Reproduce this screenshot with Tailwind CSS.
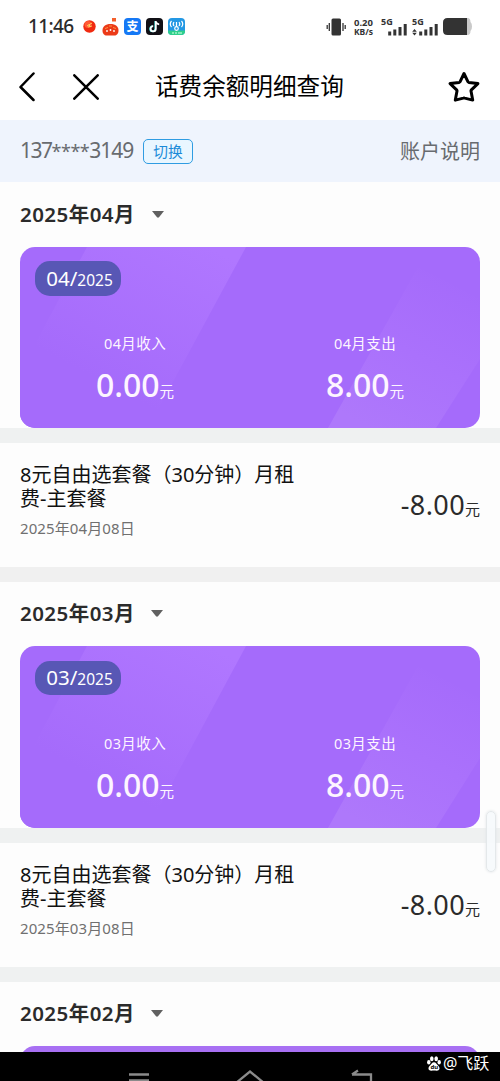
<!DOCTYPE html>
<html lang="zh-CN">
<head>
<meta charset="utf-8">
<title>话费余额明细查询</title>
<script src="https://cdn.jsdelivr.net/npm/@tailwindcss/browser@4"></script>
</head>
<body class="bg-[#fdfdfd]">
<div class="relative flex h-[1081px] w-[500px] flex-col overflow-hidden bg-[#fdfdfd] font-['Noto_Sans','Noto_Sans_CJK_SC',sans-serif] text-[#2b2b2b] whitespace-nowrap">

  <!-- Status bar -->
  <div class="flex h-[53px] shrink-0 items-center bg-white pl-[28px] pr-[28px]">
    <span class="w-[46px] text-[19px] leading-[53px] font-medium tracking-[-0.6px]">11:46</span>
    <div class="ml-[9px] flex items-center gap-[5px]">
      <svg width="13" height="17" viewBox="0 0 13 17"><circle cx="6.5" cy="8.5" r="6.2" fill="#f02a10"/><circle cx="5" cy="6.500" r="3.500" fill="#ff5a34"/><path d="M4 8l5-3M5 9l4-1M6 6l1 3" stroke="#ffd060" stroke-width="1"/></svg>
      <svg class="ml-[1px]" width="17" height="18" viewBox="0 0 17 18"><rect x="10" y="0" width="4" height="3.500" fill="#f4602c"/><path d="M.5 12.500c0-4 3-6.500 8-6.500s8 2.500 8 6.500c0 3.500-2 5-4 5H4.500c-2 0-4-1.500-4-5z" fill="#ec3a18"/><path d="M3 10.500l3-1M7 8h3M11 9.500l3 1" stroke="#ff9440" stroke-width="1"/><circle cx="5" cy="13" r=".9" fill="#fff"/><circle cx="8.500" cy="12" r=".9" fill="#fff"/><circle cx="12" cy="13" r=".9" fill="#fff"/></svg>
      <span class="flex size-[17px] items-center justify-center rounded-[4px] bg-[#1578f5] text-[12px] leading-none font-bold text-white">支</span>
      <svg width="17" height="17" viewBox="0 0 17 17"><rect width="17" height="17" rx="4" fill="#111016"/><path d="M9.300 3v7.700a2.600 2.600 0 1 1-2.600-2.600" fill="none" stroke="#35e0dc" stroke-width="1.800"/><path d="M9.800 3v7.700a2.600 2.600 0 1 1-2.600-2.600M9.800 3c.3 2.200 1.500 3.100 3.400 3.300" fill="none" stroke="#fff" stroke-width="1.800"/></svg>
      <svg width="17" height="17" viewBox="0 0 17 17"><rect width="17" height="17" rx="4" fill="#2398e4"/><path d="M0 12.500h17v.5a4 4 0 0 1-4 4H4a4 4 0 0 1-4-4z" fill="#2fd08a"/><g fill="none" stroke="#fff" stroke-width="1.200"><path d="M3.500 3q-2.500 3 0 6M6 4q-1.600 2 0 4M13.500 3q2.500 3 0 6M11 4q1.600 2 0 4"/><circle cx="8.500" cy="10.500" r="1.800"/><path d="M8.500 4v4.500"/></g><path d="M4 15h2m1 0h2m1 0h4" stroke="#d8ffe8" stroke-width="1.200"/></svg>
    </div>
    <div class="ml-auto flex items-center">
      <svg width="20" height="18" viewBox="0 0 20 18"><rect x="5.500" y="0.500" width="9.500" height="17" rx="1.500" fill="#333"/><path d="M3.300 5v8M17 5v8M1.200 7v4M19.200 7v4" stroke="#333" stroke-width="1.300"/></svg>
      <div class="ml-[7px] flex w-[21px] flex-col items-center text-[9.500px] leading-[9px] font-bold text-[#333]"><span>0.20</span><span class="text-[8.500px]">KB/s</span></div>
      <svg class="ml-[7px] overflow-visible" width="27" height="20" viewBox="0 0 27 20"><text x="0" y="8" font-size="9" font-weight="700" fill="#333">5G</text><path d="M8.700 14.500v4M13.800 12.500v6M19 10v8.500M24.200 7v11.500" stroke="#333" stroke-width="3"/></svg>
      <svg class="ml-[4px] overflow-visible" width="27" height="20" viewBox="0 0 27 20"><text x="0" y="8" font-size="9" font-weight="700" fill="#333">5G</text><path d="M8.700 14.500v4M13.800 12.500v6M19 10v8.500M24.200 7v11.500" stroke="#333" stroke-width="3"/><path d="M2.500 12l2.300 2.700H.2zM2.500 18.500l2.300-2.700H.2z" fill="#333"/></svg>
      <svg class="ml-[4px]" width="29" height="17" viewBox="0 0 29 17"><path d="M23 0h1.500q3 0 3 4 1.500 1 1.500 4.500T27.500 13q0 4-3 4H23z" fill="#c9c9c9"/><path d="M4.500 0H24v17H4.500Q0 17 0 12.500v-8Q0 0 4.500 0z" fill="#333"/></svg>
    </div>
  </div>

  <!-- Title bar -->
  <header class="flex h-[67px] shrink-0 items-center bg-white pl-[18px] pr-[20px] text-black">
    <svg width="18" height="30" viewBox="0 0 18 30"><path d="M15.500 1.500L2.500 15l13 13" fill="none" stroke="#000" stroke-width="2.500" stroke-linecap="round" stroke-linejoin="round"/></svg>
    <svg class="ml-[37px]" width="26" height="26" viewBox="0 0 26 26"><path d="M1.300 1.300l23.400 23.400M24.700 1.300L1.300 24.700" stroke="#000" stroke-width="2.500" stroke-linecap="round"/></svg>
    <h1 class="ml-[56px] text-[23.600px] leading-[67px]">话费余额明细查询</h1>
    <svg class="ml-auto" width="32" height="32" viewBox="0 0 32 32"><path d="M16 2.500l4 8.300q.3.500.9.600l9 1.200-6.500 6.200q-.5.500-.4 1.100l1.700 9.200-8-2q-.7-.2-1.400 0l-8 2L9 19.900q.1-.6-.4-1.100L2.100 12.600l9-1.200q.6-.1.900-.6z" fill="none" stroke="#000" stroke-width="3" stroke-linejoin="round"/></svg>
  </header>

  <!-- Account -->
  <div class="flex h-[62px] shrink-0 items-center bg-[#eff4fd] px-[20px] text-[#686b6f]">
    <span class="w-[113px] text-[21px] tracking-[-1px]"><span class="tracking-[-1.500px]">137</span><span class="text-[18px] tracking-[-0.500px]">****</span>3149</span>
    <span class="ml-[10px] flex h-[25px] w-[50px] items-center justify-center rounded-[5px] border-[1.500px] border-[#2f9ce2] bg-[#e9f6ff] text-[14.700px] leading-none text-[#1b8bd8]">切换</span>
    <span class="ml-auto pt-[2px] text-[20px]">账户说明</span>
  </div>

  <!-- April -->
  <section class="shrink-0">
    <div class="flex h-[65px] items-center px-[20px] pb-[1px]">
      <h2 class="w-[132px] text-[20.500px] font-semibold tracking-[0.450px]">2025年04月</h2>
      <svg width="12" height="7" viewBox="0 0 12 7"><path d="M0 0h12L7 6.300q-1 .8-2 0z" fill="#606060"/></svg>
    </div>
    <div class="bg-linear-to-b from-[#fdfdfd] from-[181px] to-[#eff1f1] to-[181px] px-[20px] pb-[15px]">
      <div class="relative h-[181px] overflow-hidden rounded-[15px] bg-[#a56bfb] text-[#fdf5ff]">
        <svg class="absolute inset-0" width="460" height="181" viewBox="0 0 460 181"><defs><linearGradient id="shine" gradientUnits="userSpaceOnUse" x1="190" y1="0" x2="110" y2="150"><stop offset="0" stop-color="#b077ff"/><stop offset="1" stop-color="#a56bfb"/></linearGradient><linearGradient id="glow" gradientUnits="userSpaceOnUse" x1="430" y1="30" x2="350" y2="181"><stop offset="0" stop-color="#a56bfb"/><stop offset=".5" stop-color="#aa71fc"/><stop offset="1" stop-color="#ae78fb"/></linearGradient></defs><path d="M67 0H226L128 181H-30z" fill="url(#shine)"/><path d="M398 20L460 52V112L416 181H308z" fill="url(#glow)"/></svg>
        <div class="relative flex h-full flex-col">
          <div class="mt-[14px] ml-[15px] flex h-[35px] w-[86px] items-baseline justify-center rounded-[15px] bg-[#5857b5] pl-[3px] leading-[34px] text-white"><span class="text-[20.500px]">04/</span><span class="text-[15.500px]">2025</span></div>
          <div class="grid grid-cols-2 text-center">
            <div><p class="mt-[36px] text-[14.500px] leading-[22px] tracking-[0.400px]">04月收入</p><p class="mt-[11px] text-[32px] leading-[40px] font-medium">0.00<span class="text-[14.500px] font-normal">元</span></p></div>
            <div><p class="mt-[36px] text-[14.500px] leading-[22px] tracking-[0.400px]">04月支出</p><p class="mt-[11px] text-[32px] leading-[40px] font-medium">8.00<span class="text-[14.500px] font-normal">元</span></p></div>
          </div>
        </div>
      </div>
    </div>
    <div class="flex h-[124px] justify-between px-[20px]">
      <div class="pt-[20px]">
        <p class="text-[20px] leading-[24px] text-[#111]">8元自由选套餐（30分钟）月租<br>费-主套餐</p>
        <p class="mt-[7px] text-[15px] leading-[20px] tracking-[0.100px] text-[#707070]">2025年04月08日</p>
      </div>
      <p class="pt-[42px] text-[27px] leading-[40px] tracking-[0.400px]">-8.00<span class="text-[15px] tracking-normal">元</span></p>
    </div>
    <div class="h-[15px] bg-[#f0f0f0]"></div>
  </section>

  <!-- March -->
  <section class="shrink-0">
    <div class="flex h-[64px] items-center px-[20px] pb-[1px]">
      <h2 class="w-[131px] text-[20.500px] font-semibold tracking-[0.450px]">2025年03月</h2>
      <svg width="12" height="7" viewBox="0 0 12 7"><path d="M0 0h12L7 6.300q-1 .8-2 0z" fill="#606060"/></svg>
    </div>
    <div class="bg-linear-to-b from-[#fdfdfd] from-[182px] to-[#eff1f1] to-[182px] px-[20px] pb-[15px]">
      <div class="relative h-[182px] overflow-hidden rounded-[15px] bg-[#a56bfb] text-[#fdf5ff]">
        <svg class="absolute inset-0" width="460" height="182" viewBox="0 0 460 182"><path d="M67 0H226L128 182H-30z" fill="url(#shine)"/><path d="M398 20L460 52V112L416 182H308z" fill="url(#glow)"/></svg>
        <div class="relative flex h-full flex-col">
          <div class="mt-[15px] ml-[15px] flex h-[34px] w-[86px] items-baseline justify-center rounded-[15px] bg-[#5857b5] pl-[3px] leading-[33px] text-white"><span class="text-[20.500px]">03/</span><span class="text-[15.500px]">2025</span></div>
          <div class="grid grid-cols-2 text-center">
            <div><p class="mt-[37px] text-[14.500px] leading-[22px] tracking-[0.400px]">03月收入</p><p class="mt-[11px] text-[32px] leading-[40px] font-medium">0.00<span class="text-[14.500px] font-normal">元</span></p></div>
            <div><p class="mt-[37px] text-[14.500px] leading-[22px] tracking-[0.400px]">03月支出</p><p class="mt-[11px] text-[32px] leading-[40px] font-medium">8.00<span class="text-[14.500px] font-normal">元</span></p></div>
          </div>
        </div>
      </div>
    </div>
    <div class="flex h-[124px] justify-between px-[20px]">
      <div class="pt-[20px]">
        <p class="text-[20px] leading-[24px] text-[#111]">8元自由选套餐（30分钟）月租<br>费-主套餐</p>
        <p class="mt-[7px] text-[15px] leading-[20px] tracking-[0.100px] text-[#707070]">2025年03月08日</p>
      </div>
      <p class="pt-[42px] text-[27px] leading-[40px] tracking-[0.400px]">-8.00<span class="text-[15px] tracking-normal">元</span></p>
    </div>
    <div class="h-[15px] bg-[#eff1f1]"></div>
  </section>

  <!-- February -->
  <section class="h-[70px] shrink-0 overflow-hidden">
    <div class="flex h-[64px] items-center px-[20px] pb-[2px]">
      <h2 class="w-[131px] text-[20.500px] font-semibold tracking-[0.450px]">2025年02月</h2>
      <svg width="12" height="7" viewBox="0 0 12 7"><path d="M0 0h12L7 6.300q-1 .8-2 0z" fill="#606060"/></svg>
    </div>
    <div class="mx-[20px] h-[181px] rounded-[15px] bg-[#a870f3]"></div>
  </section>

  <!-- System navigation -->
  <nav class="flex h-[29px] shrink-0 bg-black">
    <svg class="ml-[128px] shrink-0" width="250" height="29" viewBox="0 0 250 29" fill="none" stroke="#8b8b8b" stroke-width="2.300"><path d="M1 22.500h20M1 28.500h20M108 31l14-11.500L136 31M224 22.500h19V31M230 18.500l-6 4"/></svg>
    <div class="ml-[49px] flex h-[22px] items-center text-white">
      <svg width="14" height="15" viewBox="0 0 14 15" fill="#fff"><ellipse cx="4.800" cy="2.700" rx="1.800" ry="2.500"/><ellipse cx="9.200" cy="2.700" rx="1.800" ry="2.500"/><ellipse cx="1.800" cy="6.300" rx="1.700" ry="2.200"/><ellipse cx="12.200" cy="6.300" rx="1.700" ry="2.200"/><path d="M7 6.300c2 0 2.700 2 4 3.200 3 3 1 5.500-1.500 5.200-1.700-.3-3.300-.3-5 0C2 15 0 12.500 3 9.500 4.300 8.300 5 6.300 7 6.300z"/><text x="3.500" y="13.300" font-size="6" font-weight="700" fill="#000">du</text></svg>
      <span class="ml-[2px] text-[16px] leading-[22px] tracking-[-0.100px]">@飞跃</span>
    </div>
  </nav>

  <!-- Edge gesture handle -->
  <div class="absolute top-[811px] left-[486px] h-[61px] w-[10px] rounded-full border border-[#e4e8ea] bg-[#f6fafc]/90 shadow-[0_0_3px_#dfe3e5]"></div>
</div>
</body>
</html>
